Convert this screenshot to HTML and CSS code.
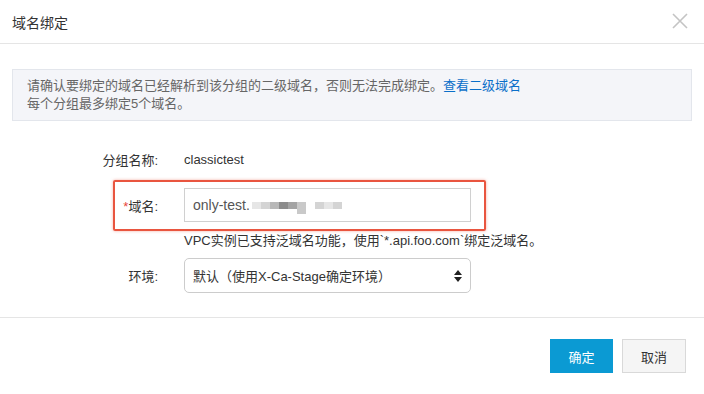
FILE: index.html
```html
<!DOCTYPE html>
<html lang="zh">
<head>
    <meta charset="UTF-8">
    <title>域名绑定</title>
    <link rel="stylesheet" href="styles.css">
</head>
<body>

<div class="dialog">
    <!-- 标题栏 -->
    <div class="dialog-header">
        <span class="dialog-title">域名绑定</span>
        <svg class="close" width="16" height="16" viewBox="0 0 16 16">
            <path d="M1 1 L15 15 M15 1 L1 15" stroke="#c4c4c4" stroke-width="1.6" fill="none"/>
        </svg>
    </div>

    <div class="dialog-body">
        <!-- 提示信息 -->
        <div class="notice">
            <p>请确认要绑定的域名已经解析到该分组的二级域名，否则无法完成绑定。<a href="#">查看二级域名</a></p>
            <p>每个分组最多绑定5个域名。</p>
        </div>

        <!-- 表单 -->
        <div class="form">
            <div class="form-row">
                <label class="form-label">分组名称:</label>
                <div class="form-control static">classictest</div>
            </div>

            <div class="form-row highlight">
                <label class="form-label"><span class="required">*</span>域名:</label>
                <div class="form-control text-input">
                    only-test.<span class="mosaic">
                        <i class="m1"></i><i class="m2"></i><i class="m3"></i><i class="m4"></i><i class="m5"></i><i class="m6"></i><i class="gap"></i><i class="m2"></i><i class="m1"></i><i class="m2"></i>
                    </span>
                </div>
            </div>
            <div class="form-help">VPC实例已支持泛域名功能，使用`*.api.foo.com`绑定泛域名。</div>

            <div class="form-row select-row">
                <label class="form-label">环境:</label>
                <div class="form-control select">
                    <span>默认（使用X-Ca-Stage确定环境）</span>
                    <svg width="8" height="12" viewBox="0 0 8 12">
                        <path d="M4 0 L8 5 L0 5 Z M0 7 L8 7 L4 12 Z" fill="#222"/>
                    </svg>
                </div>
            </div>
        </div>
    </div>

    <!-- 底部按钮 -->
    <div class="dialog-footer">
        <button class="btn btn-primary">确定</button>
        <button class="btn btn-default">取消</button>
    </div>
</div>

</body>
</html>
```

FILE: styles.css
```css
/* 基础样式 */
body {
    margin: 0;
    background: #fff;
    font-family: "Liberation Sans", "Noto Sans CJK SC", sans-serif;
    color: #333;
}
.dialog {
    width: 704px;
    height: 394px;
    background: #fff;
}

/* 标题栏 */
.dialog-header {
    height: 44px;
    display: flex;
    align-items: center;
    justify-content: space-between;
    padding: 0 16px 0 12px;
    border-bottom: 1px solid #e5e5e5;
    box-sizing: border-box;
}
.dialog-title {
    font-size: 14px;
    color: #333;
}
.close {
    margin-top: -2px;
}

/* 内容区 */
.dialog-body {
    padding: 25px 12px 24px;
    border-bottom: 1px solid #e5e5e5;
}
.notice {
    background: #f4f5f9;
    border: 1px solid #e3e6ec;
    padding: 7px 14px;
    font-size: 13px;
    line-height: 18px;
    color: #666;
}
.notice p {
    margin: 0;
}
.notice a {
    color: #0a6fc9;
    text-decoration: none;
}

/* 表单 */
.form {
    margin-top: 21px;
    font-size: 13px;
}
.form-row {
    display: flex;
    align-items: center;
    gap: 26px;
    width: 459px;
    height: 34px;
    margin-bottom: 12px;
}
.form-label {
    width: 146px;
    text-align: right;
    color: #333;
}
.required {
    color: #e8463a;
}
.form-control {
    width: 287px;
    height: 34px;
    box-sizing: border-box;
    display: flex;
    align-items: center;
}
.static {
    color: #333;
}
.text-input {
    border: 1px solid #d0d0d0;
    padding: 0 8px;
    color: #555;
    font-size: 14px;
}

/* 标注红框 */
.highlight {
    position: relative;
    margin-bottom: 0;
}
.highlight::after {
    content: "";
    position: absolute;
    left: 101px;
    right: -15px;
    top: -8px;
    bottom: -9px;
    border: 2px solid #e9553f;
    border-radius: 2px;
    box-shadow: 0 0 3px rgba(233, 85, 63, 0.5);
}

/* 打码部分 */
.mosaic {
    display: inline-flex;
    align-items: center;
    margin-left: 2px;
}
.mosaic i {
    display: inline-block;
    width: 9px;
    height: 7px;
}
.mosaic .m1 { background: #e6e6e6; }
.mosaic .m2 { background: #d4d4d4; }
.mosaic .m3 { background: #b8b8b8; }
.mosaic .m4 { background: #8c8c8c; }
.mosaic .m5 { background: #a4a4a4; }
.mosaic .m6 { background: #c9c9c9; height: 12px; margin-top: 5px; }
.mosaic .gap { background: transparent; }

.form-help {
    margin: 10px 0 8px 172px;
    line-height: 18px;
    color: #333;
}

/* 下拉框 */
.select-row {
    height: 35px;
    margin-bottom: 0;
}
.select {
    height: 35px;
    border: 1px solid #ccc;
    border-radius: 5px;
    padding: 0 8px;
    justify-content: space-between;
    color: #333;
}

/* 按钮 */
.dialog-footer {
    display: flex;
    justify-content: flex-end;
    gap: 9px;
    padding: 21px 18px 20px;
}
.btn {
    height: 34px;
    width: 64px;
    font-family: inherit;
    font-size: 13px;
    border-radius: 0;
    cursor: pointer;
}
.btn-primary {
    width: 63px;
    background: #0b9ad3;
    color: #fff;
    border: none;
}
.btn-default {
    background: #f5f5f5;
    color: #333;
    border: 1px solid #d9d9d9;
}
```
